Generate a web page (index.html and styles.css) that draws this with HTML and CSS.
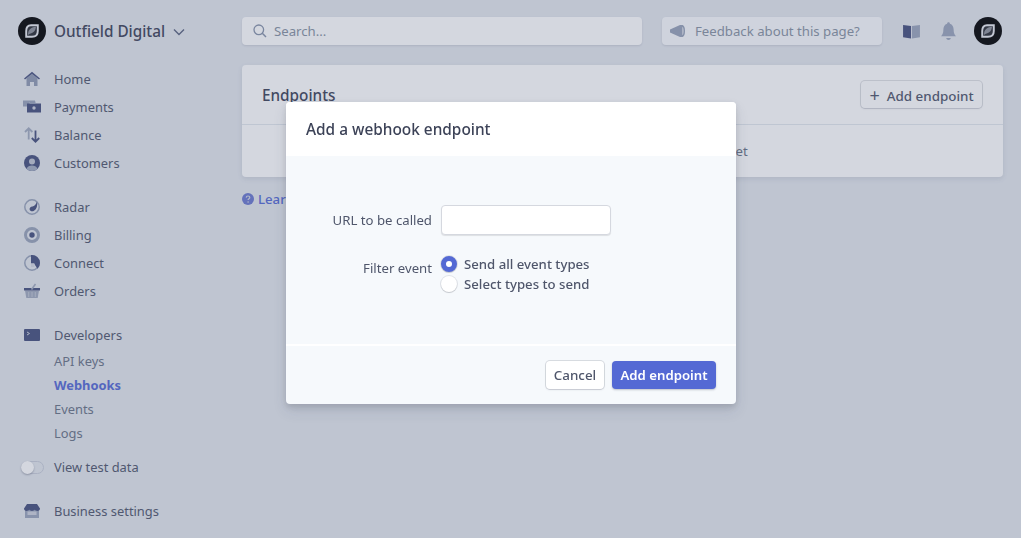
FILE: index.html
```html
<!DOCTYPE html>
<html lang="en">
<head>
    <meta charset="UTF-8">
    <meta name="viewport" content="width=device-width, initial-scale=1.0">
    <title>Webhooks - Outfield Digital</title>
    <link rel="stylesheet" href="styles.css">
</head>
<body>
    <div class="dashboard">
        <aside class="sidebar">
            <div class="account">
                <svg class="logo" viewBox="0 0 28 28"><circle cx="14" cy="14" r="14" fill="#000"/><path d="M13 8.200h6.800V14c0 3.800-2 5.800-5.800 5.800H8.200V14c0-3.800 1.800-5.800 4.800-5.800z" fill="#2a2c33" stroke="#e8eaef" stroke-width="1.900"/><path d="M10 18c0-5 2.500-7.800 8-8.200-.3 2.400-1 4.200-2.800 5.400-1.600 1.100-3.400 1-5.200 2.800z" fill="#8e929b"/></svg>
                <span class="account-name">Outfield Digital</span>
                <svg class="chevron" viewBox="0 0 12 8"><path d="M1 1.500l5 5 5-5" fill="none" stroke="#59637f" stroke-width="1.400"/></svg>
            </div>

            <nav class="nav-group">
                <a class="nav-item"><svg class="nav-icon" viewBox="0 0 16 16"><path d="M2.500 7.500L8 3l5.500 4.500V15h-3.500v-4H6v4H2.500z" fill="#8f9ab2"/><path d="M0 7.500L8 .8l8 6.700-1 1.100L8 3 1 8.600z" fill="#4a5480"/></svg>Home</a>
                <a class="nav-item"><svg class="nav-icon" viewBox="0 0 16 16"><path d="M-1 1.500h12v2H5.500v4H-1z" fill="#97a2b8"/><path d="M3 4.500h14v9H3z" fill="#454f7c"/><path d="M6 2.500h5.500V4.500H6z" fill="#97a2b8"/><circle cx="10" cy="9" r="1.700" fill="#ccd1dc"/></svg>Payments</a>
                <a class="nav-item"><svg class="nav-icon" viewBox="0 0 16 16"><path d="M4.700 12.500V1.500M1 5l3.700-3.700L8.400 5" fill="none" stroke="#a0aabe" stroke-width="1.800"/><path d="M11.500 3.500V14.500M7.800 11l3.700 3.700L15.200 11" fill="none" stroke="#454f7c" stroke-width="1.800"/></svg>Balance</a>
                <a class="nav-item"><svg class="nav-icon" viewBox="0 0 16 16"><circle cx="8" cy="8" r="8" fill="#454f7c"/><path d="M2.500 13.800C3.500 11.500 5.500 10.500 8 10.500s4.500 1 5.500 3.300C12 15.200 10 16 8 16s-4-.8-5.500-2.200z" fill="#a3adc1"/><circle cx="8" cy="6.500" r="3" fill="#bfc5d2"/></svg>Customers</a>
            </nav>

            <nav class="nav-group">
                <a class="nav-item"><svg class="nav-icon" viewBox="0 0 16 16"><circle cx="8" cy="8" r="7.200" fill="none" stroke="#98a3b9" stroke-width="1.500"/><path d="M13 2.500c.8 4-.2 7.500-3 9.300-1.700 1-4 .5-4.400-1.300-.3-1.600 1-2.800 2.900-3 1.900-.3 3.500-1.800 4.500-5z" fill="#454f7c"/></svg>Radar</a>
                <a class="nav-item"><svg class="nav-icon" viewBox="0 0 16 16"><circle cx="8" cy="8" r="6.500" fill="none" stroke="#98a3b9" stroke-width="3"/><circle cx="8" cy="8" r="2.700" fill="#454f7c"/></svg>Billing</a>
                <a class="nav-item"><svg class="nav-icon" viewBox="0 0 16 16"><circle cx="8" cy="8" r="7.200" fill="none" stroke="#98a3b9" stroke-width="1.500"/><path d="M7 0a8 8 0 0 1 9 8 8 8 0 0 1-2.500 5.800L10 8.500H7z" fill="#454f7c"/><path d="M7 8.500h3.500V12H7z" fill="#d3d7e0"/></svg>Connect</a>
                <a class="nav-item"><svg class="nav-icon" viewBox="0 0 16 16"><path d="M1 7.500h14l-1.300 7.500H2.300z" fill="#a0aabe"/><path d="M4.700 9v5M8 9v5M11.300 9v5" stroke="#bfc5d2" stroke-width="1"/><path d="M0 5h16v2.500H0z" fill="#454f7c"/><path d="M7.500 6.500L11.500 1" stroke="#a0aabe" stroke-width="1.600"/></svg>Orders</a>
            </nav>

            <nav class="nav-group">
                <a class="nav-item"><svg class="nav-icon" viewBox="0 0 16 16"><rect y="2" width="16" height="12" rx="1" fill="#454f7c"/><path d="M3 5l2.500 1.500L3 8" fill="none" stroke="#ccd1dc" stroke-width="1"/></svg>Developers</a>
                <div class="sub-nav">
                    <a class="sub-item">API keys</a>
                    <a class="sub-item is-active">Webhooks</a>
                    <a class="sub-item">Events</a>
                    <a class="sub-item">Logs</a>
                </div>
            </nav>

            <div class="test-toggle">
                <span class="switch"><span class="knob"></span></span>
                <span>View test data</span>
            </div>

            <a class="nav-item"><svg class="nav-icon" viewBox="0 0 16 16"><path d="M1 7h14v8H1z" fill="#9aa5bb"/><path d="M3.500 8.500h9V12h-9z" fill="#ccd1dc"/><path d="M3 1h10l3 4.500c0 1.500-1 2.500-2.700 2.500-1 0-2-.5-2.600-1.200-.6.700-1.600 1.200-2.700 1.200s-2.100-.5-2.700-1.200C4.700 7.500 3.700 8 2.700 8 1 8 0 7 0 5.500z" fill="#454f7c"/></svg>Business settings</a>
        </aside>

        <main class="content">
            <header class="topbar">
                <div class="search">
                    <svg class="bar-icon" viewBox="0 0 14 14"><circle cx="5.800" cy="5.800" r="4.800" fill="none" stroke="#8793aa" stroke-width="1.300"/><path d="M9.300 9.300l3.700 3.700" stroke="#8793aa" stroke-width="1.500"/></svg>
                    <span>Search...</span>
                </div>
                <div class="feedback">
                    <svg class="megaphone" viewBox="0 0 16 14"><path d="M0 5.500L10 1v12L0 8.500z" fill="#97a2b8"/><path d="M10 1h2c2 0 3 2.500 3 6s-1 6-3 6h-2z" fill="#97a2b8"/><path d="M12 3c1.300 0 1.800 2 1.800 4s-.5 4-1.800 4z" fill="#ccd1dc"/></svg>
                    <span>Feedback about this page?</span>
                </div>
                <div class="top-icons">
                    <svg class="book" viewBox="0 0 18 16"><path d="M0 1l8.500 1v13.500L0 14z" fill="#454f7c"/><path d="M18 1L9.500 2v13.500L18 14z" fill="#9aa5bb"/></svg>
                    <svg class="bell" viewBox="0 0 16 20"><path d="M8 0c1 0 1.500.7 1.500 1.700C12.200 2.500 13.500 5 13.500 8c0 3.500.8 5 2.500 7H0c1.700-2 2.500-3.500 2.500-7 0-3 1.300-5.500 4-6.300C6.500.7 7 0 8 0z" fill="#9aa5bb"/><path d="M5.500 17h5c-.3 1.300-1.200 2-2.500 2s-2.200-.7-2.500-2z" fill="#9aa5bb"/></svg>
                    <svg class="logo" viewBox="0 0 28 28"><circle cx="14" cy="14" r="14" fill="#000"/><path d="M13 8.200h6.800V14c0 3.800-2 5.800-5.800 5.800H8.200V14c0-3.800 1.800-5.800 4.800-5.800z" fill="#2a2c33" stroke="#e8eaef" stroke-width="1.900"/><path d="M10 18c0-5 2.500-7.800 8-8.200-.3 2.400-1 4.200-2.800 5.400-1.600 1.100-3.400 1-5.200 2.800z" fill="#8e929b"/></svg>
                </div>
            </header>

            <section class="card">
                <div class="card-head">
                    <h2>Endpoints</h2>
                    <button class="btn btn-add"><span class="plus">+</span>Add endpoint</button>
                </div>
                <p class="empty">No webhook endpoints were created yet</p>
            </section>

            <a class="learn">
                <svg class="help" viewBox="0 0 12 12"><circle cx="6" cy="6" r="6" fill="#6a78cf"/><path d="M4.200 4.600C4.300 3.600 5 3 6 3s1.800.6 1.800 1.500c0 1.300-1.700 1.300-1.700 2.500" fill="none" stroke="#d3d7e0" stroke-width="1.200"/><circle cx="6.100" cy="9" r=".8" fill="#d3d7e0"/></svg>
                Learn more about webhooks
            </a>
        </main>
    </div>

    <div class="overlay">
        <div class="modal">
            <div class="modal-head">Add a webhook endpoint</div>
            <form class="modal-body">
                <div class="form-row">
                    <label class="form-label" for="url">URL to be called</label>
                    <input class="text-input" type="text" id="url">
                </div>
                <div class="form-row form-row-radios">
                    <span class="form-label">Filter event</span>
                    <div class="radios">
                        <div class="radio-line"><span class="radio is-on"></span>Send all event types</div>
                        <div class="radio-line"><span class="radio"></span>Select types to send</div>
                    </div>
                </div>
            </form>
            <div class="modal-foot">
                <button class="btn btn-white">Cancel</button>
                <button class="btn btn-primary">Add endpoint</button>
            </div>
        </div>
    </div>
</body>
</html>
```

FILE: styles.css
```css
* {
    box-sizing: border-box;
}

body {
    margin: 0;
    height: 538px;
    overflow: hidden;
    background-color: #e3e7ed;
    color: #4f566b;
    font-family: "Noto Sans", "Open Sans", sans-serif;
    font-size: 13.2px;
    line-height: 20px;
}

.dashboard {
    display: flex;
    height: 100%;
}

.sidebar {
    width: 242px;
    flex-shrink: 0;
    padding: 17px 0 0 18px;
    font-size: 12.9px;
}

.account {
    display: flex;
    align-items: center;
    height: 28px;
    margin-bottom: 20px;
}

.logo {
    width: 28px;
    height: 28px;
    display: block;
}

.account-name {
    margin-left: 8px;
    font-size: 15.3px;
    font-weight: 500;
    color: #3c4257;
}

.chevron {
    width: 12px;
    height: 8px;
    margin-left: 8px;
    margin-top: 2px;
}

.nav-group {
    margin-bottom: 16px;
}

.nav-item {
    display: flex;
    align-items: center;
    height: 28px;
    padding-left: 6px;
    color: #4f566b;
}

.nav-icon {
    width: 16px;
    height: 16px;
    margin-right: 14px;
    flex-shrink: 0;
    overflow: visible;
}

.sub-nav {
    padding: 0 0 0 36px;
}

.sub-item {
    display: block;
    height: 24px;
    line-height: 24px;
    color: #697386;
}

.sub-item.is-active {
    color: #5469d4;
    font-weight: 700;
}

.test-toggle {
    display: flex;
    align-items: center;
    height: 24px;
    margin-top: -6px;
    margin-bottom: 18px;
    color: #4f566b;
}

.switch {
    width: 23px;
    height: 13px;
    margin-left: 3px;
    margin-right: 10px;
    border-radius: 7px;
    border: 1px solid #c8cdd9;
    position: relative;
}

.knob {
    position: absolute;
    left: -1px;
    top: -1px;
    width: 13px;
    height: 13px;
    border-radius: 50%;
    background-color: #ffffff;
    box-shadow: 0 1px 2px rgba(60, 66, 87, 0.4);
}

.content {
    flex: 1;
    padding: 17px 18px 0 0;
}

.topbar {
    display: flex;
    align-items: center;
    height: 28px;
    margin-bottom: 20px;
}

.search,
.feedback {
    display: flex;
    align-items: center;
    height: 28px;
    border-radius: 4px;
    background-color: #ffffff;
    box-shadow: 0 1px 2px rgba(60, 66, 87, 0.15);
    color: #8792a2;
}

.search {
    width: 400px;
    padding-left: 11px;
    margin-right: 20px;
}

.bar-icon {
    width: 14px;
    height: 14px;
    margin-right: 7px;
}

.feedback {
    width: 220px;
    padding-left: 8px;
    background-color: #f9fafc;
}

.megaphone {
    width: 16px;
    height: 14px;
    margin-right: 9px;
}

.top-icons {
    display: flex;
    align-items: center;
    margin-left: 21px;
}

.book {
    width: 17px;
    height: 15px;
    margin-right: 21px;
}

.bell {
    width: 15px;
    height: 19px;
    margin-right: 18px;
}

.card {
    height: 112px;
    border-radius: 4px;
    background-color: #ffffff;
    box-shadow: 0 2px 5px rgba(60, 66, 87, 0.12);
    overflow: hidden;
}

.card-head {
    display: flex;
    align-items: center;
    justify-content: space-between;
    height: 60px;
    padding: 0 20px;
    border-bottom: 1px solid #e3e8ee;
}

.card-head h2 {
    margin: 0;
    font-size: 15.3px;
    font-weight: 500;
    color: #3c4257;
}

.empty {
    margin: 0;
    height: 52px;
    line-height: 52px;
    text-align: center;
    color: #697386;
}

.learn {
    display: flex;
    align-items: center;
    gap: 4px;
    margin-top: 12px;
    font-weight: 500;
    color: #5469d4;
}

.help {
    width: 12px;
    height: 12px;
}

.btn {
    height: 28px;
    padding: 0;
    border: 0;
    border-radius: 4px;
    background-color: #ffffff;
    box-shadow: 0 0 0 1px rgba(60, 66, 87, 0.16), 0 1px 2px rgba(60, 66, 87, 0.12);
    color: #4f566b;
    font-family: inherit;
    font-size: 13.4px;
    font-weight: 500;
}

.btn-add {
    width: 121px;
    height: 27px;
    margin-right: 1px;
}

.plus {
    margin-right: 7px;
    font-size: 18px;
    font-weight: 400;
    vertical-align: -1px;
}

.overlay {
    position: fixed;
    inset: 0;
    background-color: rgba(82, 95, 127, 0.25);
}

.modal {
    position: absolute;
    left: 286px;
    top: 102px;
    width: 450px;
    height: 302px;
    display: flex;
    flex-direction: column;
    border-radius: 4px;
    background-color: #f6f9fc;
    box-shadow: 0 7px 14px rgba(60, 66, 87, 0.12), 0 3px 6px rgba(0, 0, 0, 0.12);
    overflow: hidden;
}

.modal-head {
    height: 54px;
    padding-left: 20px;
    line-height: 55px;
    background-color: #ffffff;
    font-size: 15.4px;
    font-weight: 500;
    color: #3c4257;
}

.modal-body {
    flex: 1;
    padding-top: 49px;
    border-bottom: 2px solid #ffffff;
}

.form-row {
    display: flex;
    align-items: center;
    gap: 9px;
}

.form-row-radios {
    align-items: flex-start;
    margin-top: 19px;
}

.form-row-radios .form-label {
    padding-top: 4px;
}

.form-label {
    width: 146px;
    text-align: right;
    color: #4f566b;
}

.text-input {
    width: 170px;
    height: 30px;
    border: 1px solid #d5d8df;
    border-radius: 4px;
    background-color: #ffffff;
    box-shadow: 0 1px 1px rgba(0, 0, 0, 0.1);
}

.radio-line {
    display: flex;
    align-items: center;
    height: 20px;
    font-weight: 500;
    color: #4f566b;
}

.radio {
    width: 16px;
    height: 16px;
    margin-right: 7px;
    border-radius: 50%;
    background-color: #ffffff;
    box-shadow: 0 0 0 1px rgba(60, 66, 87, 0.12), 0 1px 1px rgba(0, 0, 0, 0.12);
}

.radio.is-on {
    border: 5px solid #5469d4;
    background-clip: padding-box;
}

.modal-foot {
    display: flex;
    justify-content: flex-end;
    gap: 8px;
    height: 58px;
    padding: 15px 20px 0 0;
}

.btn-white {
    width: 58px;
}

.btn-primary {
    width: 104px;
    background-color: #5469d4;
    color: #ffffff;
    box-shadow: 0 1px 2px rgba(60, 66, 87, 0.3);
    font-size: 13.2px;
    font-weight: 600;
}
```
